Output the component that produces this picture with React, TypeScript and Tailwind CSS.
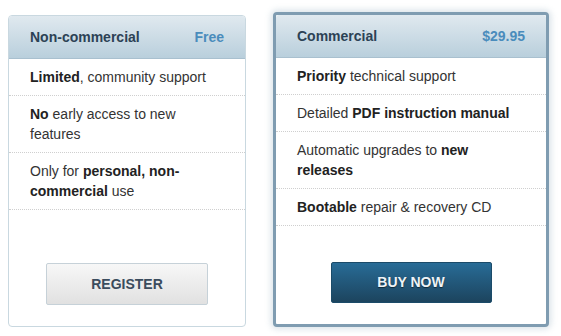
import React from 'react';

type Plan = {
  name: string;
  price: string;
  features: React.ReactNode[];
  featured?: boolean;
  cta: string;
};

const plans: Plan[] = [
  {
    name: 'Non-commercial',
    price: 'Free',
    cta: 'REGISTER',
    features: [
      <><b>Limited</b>, community support</>,
      <><b>No</b> early access to new features</>,
      <>Only for <b>personal, non-commercial</b> use</>,
    ],
  },
  {
    name: 'Commercial',
    price: '$29.95',
    cta: 'BUY NOW',
    featured: true,
    features: [
      <><b>Priority</b> technical support</>,
      <>Detailed <b>PDF instruction manual</b></>,
      <>Automatic upgrades to <b>new releases</b></>,
      <><b>Bootable</b> repair &amp; recovery CD</>,
    ],
  },
];

function PlanCard({ plan }: { plan: Plan }) {
  const featured = plan.featured;
  return (
    <div
      className={
        featured
          ? 'mt-[12px] flex h-[315px] w-[276px] flex-col rounded-[4px] border-[3px] border-[#7f9cb1] bg-white shadow-[0_0_6px_2px_rgba(170,190,205,0.45)]'
          : 'mt-[15px] flex h-[312px] w-[238px] flex-col rounded-[4px] border border-[#c9d8e0] bg-white'
      }
    >
      <div
        className={
          'flex items-center justify-between rounded-t-[3px] border-b border-[#a9c0cf] bg-gradient-to-b from-[#e0e9ef] to-[#b9cfdc] px-[21px] ' +
          (featured ? 'h-[43px]' : 'h-[43px]')
        }
      >
        <span className="text-[14px] font-bold text-[#2c4255]">{plan.name}</span>
        <span className="text-[14px] font-bold text-[#4a8cbc]">{plan.price}</span>
      </div>
      <ul>
        {plan.features.map((f, i) => (
          <li
            key={i}
            className="border-b border-dotted border-[#cfcfcf] px-[21px] py-[8px] text-[14px] leading-[20px] text-[#333] [&_b]:text-[#222]"
          >
            {f}
          </li>
        ))}
      </ul>
      <div className="flex-1" />
      <div className="mb-[21px] flex justify-center">
        {featured ? (
          <button className="h-[41px] w-[161px] rounded-[2px] border border-[#1b4b69] bg-gradient-to-b from-[#286c97] to-[#1c445e] text-[14px] font-bold text-[#eef3f7] [text-shadow:0_1px_1px_rgba(0,0,0,0.5)]">
            {plan.cta}
          </button>
        ) : (
          <button className="h-[42px] w-[162px] rounded-[2px] border border-[#c6d1d8] bg-gradient-to-b from-[#f7f7f7] to-[#e1e1e1] text-[14px] font-bold text-[#3b4c5d]">
            {plan.cta}
          </button>
        )}
      </div>
    </div>
  );
}

export default function App() {
  return (
    <div className="h-[336px] w-[561px] overflow-hidden bg-white font-['Liberation_Sans',Arial,sans-serif]">
      <div className="flex items-start gap-[27px] pl-[8px]">
        {plans.map((p) => (
          <PlanCard key={p.name} plan={p} />
        ))}
      </div>
    </div>
  );
}
